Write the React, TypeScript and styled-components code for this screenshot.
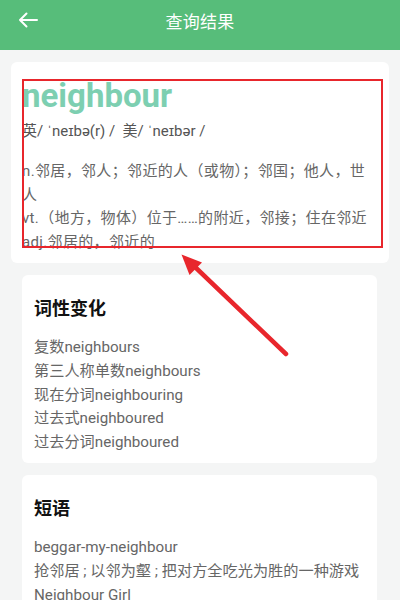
import React from "react";
import styled, { createGlobalStyle } from "styled-components";

const Global = createGlobalStyle`
  html, body { margin: 0; padding: 0; background: #f4f5f5; }
  body { font-family: Roboto, "Noto Sans CJK SC", sans-serif; }
  * { box-sizing: border-box; }
`;

const Page = styled.div`
  position: relative;
  width: 400px;
  min-height: 600px;
  background: #f4f5f5;
  overflow: hidden;
`;

const Header = styled.header`
  height: 50px;
  background: #57bd7a;
  display: flex;
  align-items: center;
  justify-content: center;
  position: relative;
`;

const BackButton = styled.div`
  position: absolute;
  left: 18px;
  top: 12px;
  width: 20px;
  height: 16px;
  display: flex;
`;

const Title = styled.h1`
  margin: 0 0 10px 0;
  font-size: 17px;
  font-weight: 400;
  color: #ffffff;
  letter-spacing: 0.3px;
`;

const Content = styled.main`
  display: flex;
  flex-direction: column;
  gap: 12px;
  padding: 12px 11px;
`;

const WordCard = styled.section`
  position: relative;
  background: #ffffff;
  border-radius: 6px;
  padding: 15px 11px 9px 11px;
`;

const Word = styled.div`
  font-size: 33px;
  line-height: 38px;
  font-weight: 700;
  color: #7dcfb1;
`;

const Phonetic = styled.div`
  margin-top: 4px;
  font-size: 15px;
  line-height: 24px;
  color: #555555;
`;

const Defs = styled.div`
  margin-top: 17px;
  font-size: 15px;
  line-height: 23.5px;
  letter-spacing: 0.35px;
  color: #666666;
`;

const SectionCard = styled.section`
  background: #ffffff;
  border-radius: 6px;
  margin: 0 12px 0 11px;
  padding: 21px 10px 8px 12px;
`;

const SectionTitle = styled.h2`
  margin: 0 0 14px 0;
  font-size: 18px;
  line-height: 26px;
  font-weight: 700;
  color: #111111;
`;

const Item = styled.div`
  font-size: 15.2px;
  line-height: 23.8px;
  color: #666666;
  white-space: nowrap;
`;

const Highlight = styled.div`
  position: absolute;
  left: 11px;
  top: 17px;
  width: 361px;
  height: 169px;
  border: 2px solid #e8262c;
  pointer-events: none;
`;

const Overlay = styled.svg`
  position: absolute;
  left: 0;
  top: 0;
  pointer-events: none;
`;

export default function App() {
  return (
    <Page>
      <Global />
      <Header>
        <BackButton>
          <svg width="20" height="16" viewBox="0 0 20 16" fill="none">
            <path d="M19 8H2M8.5 1.5L2 8l6.5 6.5" stroke="#fff" strokeWidth="2" strokeLinecap="round" strokeLinejoin="round" />
          </svg>
        </BackButton>
        <Title>查询结果</Title>
      </Header>
      <Content>
        <WordCard>
          <Word>neighbour</Word>
          <Phonetic>英/ ˈneɪbə(r) /&nbsp; 美/ ˈneɪbər /</Phonetic>
          <Defs>
            <div>n.邻居，邻人；邻近的人（或物）；邻国；他人，世人</div>
            <div>vt.（地方，物体）位于……的附近，邻接；住在邻近</div>
            <div>adj.邻居的，邻近的</div>
          </Defs>
          <Highlight />
        </WordCard>
        <SectionCard>
          <SectionTitle>词性变化</SectionTitle>
          <Item>复数neighbours</Item>
          <Item>第三人称单数neighbours</Item>
          <Item>现在分词neighbouring</Item>
          <Item>过去式neighboured</Item>
          <Item>过去分词neighboured</Item>
        </SectionCard>
        <SectionCard>
          <SectionTitle>短语</SectionTitle>
          <Item>beggar-my-neighbour</Item>
          <Item>抢邻居 ; 以邻为壑 ; 把对方全吃光为胜的一种游戏</Item>
          <Item>Neighbour Girl</Item>
        </SectionCard>
      </Content>
      <Overlay width="400" height="600" viewBox="0 0 400 600">
        <line x1="286" y1="354" x2="194" y2="266" stroke="#e8262c" strokeWidth="4.5" strokeLinecap="round" />
        <polygon points="181.5,254.5 202,262.5 189.5,275" fill="#e8262c" />
      </Overlay>
    </Page>
  );
}
